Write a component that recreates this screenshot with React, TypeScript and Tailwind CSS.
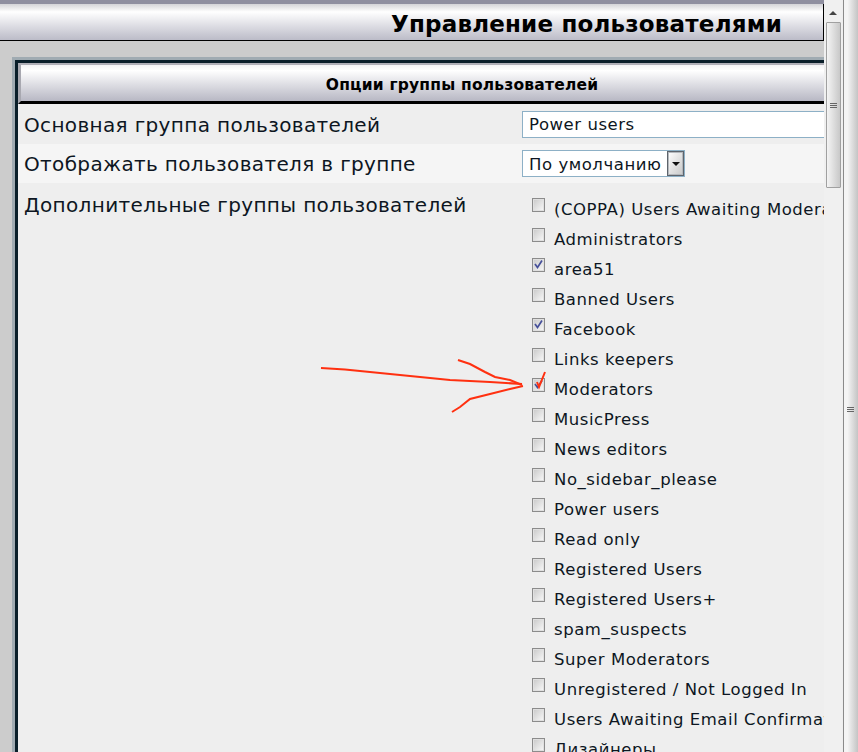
const groups: [string, boolean][] = [
  ["(COPPA) Users Awaiting Moderation", false],
  ["Administrators", false],
  ["area51", true],
  ["Banned Users", false],
  ["Facebook", true],
  ["Links keepers", false],
  ["Moderators", true],
  ["MusicPress", false],
  ["News editors", false],
  ["No_sidebar_please", false],
  ["Power users", false],
  ["Read only", false],
  ["Registered Users", false],
  ["Registered Users+", false],
  ["spam_suspects", false],
  ["Super Moderators", false],
  ["Unregistered / Not Logged In", false],
  ["Users Awaiting Email Confirmation", false],
  ["Дизайнеры", false],
];

function Check({ checked }: { checked: boolean }) {
  return (
    <span className="relative mt-[-1px] mr-[1px] block h-[14px] w-[13px] shrink-0 border border-[#8c8c8c] bg-gradient-to-br from-[#c8c8c8] to-[#fafafa] shadow-[inset_0_0_0_1px_#e0e0e0]">
      {checked && (
        <svg viewBox="0 0 11 11" className="absolute left-0 top-0 h-[11px] w-[11px]">
          <path d="M2 5 L4.5 8.5 L9 1.5" fill="none" stroke="#46509a" strokeWidth="1.7" />
        </svg>
      )}
    </span>
  );
}

function Grip() {
  return (
    <div className="flex w-[7px] flex-col gap-[1px]">
      <div className="h-px bg-[#666]" />
      <div className="h-px bg-[#666]" />
      <div className="h-px bg-[#666]" />
    </div>
  );
}

export default function App() {
  return (
    <div className="relative flex h-[752px] w-[858px] overflow-hidden bg-[#eeeeee] font-['DejaVu_Sans',sans-serif] text-[#0d1622]">
      <div className="flex w-[824px] shrink-0 flex-col overflow-hidden bg-[#cccccc]">
        <div className="h-1 w-[824px] shrink-0 bg-[#8f8fa0]" />
        <div className="flex h-[37px] shrink-0 items-center justify-end border-r border-b border-black bg-gradient-to-b from-[#d4d4d8] via-white via-[22%] to-[#bcbcc8] pr-[41px] pt-[4px] text-[23px] font-bold tracking-[0.2px] text-black">
          Управление пользователями
        </div>
        <div className="ml-3 mt-4 w-[900px] flex-1 border-[3px] border-r-0 border-b-0 border-[#a0abb2]">
          <div className="h-full border-[3px] border-r-0 border-b-0 border-[#0a1f2a] bg-[#eeeeee]">
            <div className="flex h-[41px] w-[885px] items-center justify-center border-b-[3px] border-t-2 border-l-[3px] border-b-black border-t-[#b0b0b8] border-l-[#a8a8b0] bg-gradient-to-b from-[#f4f4f6] via-white via-[15%] to-[#b8b8c4] pt-[5px] text-[15.5px] font-bold tracking-[0.2px] text-black">
              Опции группы пользователей
            </div>
            <div className="flex h-10 items-center bg-[#eeeeee]">
              <div className="w-[504px] pl-[6px] pt-[1px] text-[20px] tracking-[0.35px]">Основная группа пользователей</div>
              <div className="flex h-[27px] w-[360px] items-center border border-[#8db0c6] bg-white pl-[6px] pt-[3px] text-[16.5px] tracking-[0.55px]">Power users</div>
            </div>
            <div className="flex h-[39px] items-center bg-[#f5f5f5]">
              <div className="w-[504px] pl-[6px] pt-[1px] text-[20px] tracking-[0.35px]">Отображать пользователя в группе</div>
              <div className="flex h-[27px] w-[163px] items-center justify-between border border-[#8db0c6] bg-white pl-[6px] text-[16.5px] tracking-[0.55px]">
                <span className="pt-[3px]">По умолчанию</span>
                <span className="flex h-full w-[17px] items-center justify-center border border-[#5e646c] bg-gradient-to-br from-white to-[#c8c8c8] shadow-[inset_0_0_0_1px_#b4b8bc]">
                  <svg viewBox="0 0 8 4" className="h-1 w-2"><path d="M0 0H8L4 4Z" fill="#111" /></svg>
                </span>
              </div>
            </div>
            <div className="flex">
              <div className="w-[504px] pl-[6px] pt-[7px] text-[20px] tracking-[0.35px]">Дополнительные группы пользователей</div>
              <div className="flex w-[300px] flex-col pt-[11px]">
                {groups.map(([name, checked]) => (
                  <div key={name} className="flex h-[30px] gap-[8px] whitespace-nowrap pl-[10px] pt-[5px] text-[16.5px] leading-[20px] tracking-[0.55px]">
                    <Check checked={checked} />
                    <span className="pt-[1px]">{name}</span>
                  </div>
                ))}
              </div>
            </div>
          </div>
        </div>
      </div>

      <div className="flex w-[18px] shrink-0 flex-col items-center bg-[#f0f0f0] pt-[4px]">
        <svg viewBox="0 0 8 4" className="mt-[7px] h-1 w-2"><path d="M0 4L4 0L8 4Z" fill="#444" /></svg>
        <div className="mt-[7px] flex h-[166px] w-[15px] items-center justify-center rounded-[1px] border border-[#a0a0a0] bg-gradient-to-r from-[#f4f4f4] via-[#dedede] to-[#c8c8c8]">
          <Grip />
        </div>
      </div>

      <div className="ml-[1px] flex flex-1 items-start border-l border-[#8a8a8a] bg-gradient-to-r from-[#f4f4f4] from-[25%] to-[#c4c4c4] pl-[3px] pt-[407px]">
        <Grip />
      </div>

      <svg viewBox="0 0 858 752" className="pointer-events-none absolute left-0 top-0 h-[752px] w-[858px]" fill="none" stroke="#ff3010" strokeWidth="2">
        <path d="M321 368 L345 369.5 L400 375 L450 380 L490 382 L522 384" />
        <path d="M458 360 L470 364 L485 372 L495 377 L510 380 L522 385" />
        <path d="M452 412 L460 407 L470 399 L490 394 L510 389 L523 386" />
        <path d="M545 372 L539 387 L537 382" />
      </svg>
    </div>
  );
}
